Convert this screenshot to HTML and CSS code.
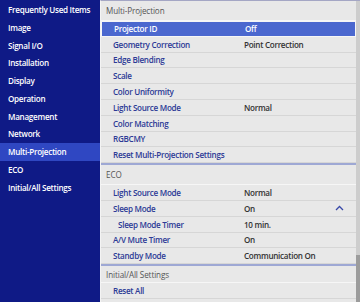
FILE: index.html
```html
<!DOCTYPE html>
<html lang="en">
<head>
  <meta charset="UTF-8">
  <title>Multi-Projection</title>
  <link rel="stylesheet" href="styles.css">
</head>
<body>
  <div class="screen">
    <nav class="sidebar">
      <div class="nav-item">Frequently Used Items</div>
      <div class="nav-item">Image</div>
      <div class="nav-item">Signal I/O</div>
      <div class="nav-item">Installation</div>
      <div class="nav-item">Display</div>
      <div class="nav-item">Operation</div>
      <div class="nav-item">Management</div>
      <div class="nav-item">Network</div>
      <div class="nav-item active">Multi-Projection</div>
      <div class="nav-item">ECO</div>
      <div class="nav-item">Initial/All Settings</div>
    </nav>

    <main class="panel">
      <div class="list">
        <div class="section">
          <div class="section-title">Multi-Projection</div>
          <div class="row selected"><span>Projector ID</span><span class="value">Off</span></div>
          <div class="row"><span>Geometry Correction</span><span class="value">Point Correction</span></div>
          <div class="row"><span>Edge Blending</span><span class="value"></span></div>
          <div class="row"><span>Scale</span><span class="value"></span></div>
          <div class="row"><span>Color Uniformity</span><span class="value"></span></div>
          <div class="row"><span>Light Source Mode</span><span class="value">Normal</span></div>
          <div class="row"><span>Color Matching</span><span class="value"></span></div>
          <div class="row"><span>RGBCMY</span><span class="value"></span></div>
          <div class="row"><span>Reset Multi-Projection Settings</span><span class="value"></span></div>
        </div>

        <div class="section">
          <div class="section-title">ECO</div>
          <div class="row"><span>Light Source Mode</span><span class="value">Normal</span></div>
          <div class="row">
            <span>Sleep Mode</span><span class="value">On</span>
            <svg class="chevron" width="9" height="6" viewBox="0 0 9 6">
              <path d="M1 5 L4.5 1.5 L8 5" fill="none" stroke="#3848a8" stroke-width="1.3"/>
            </svg>
          </div>
          <div class="row sub"><span>Sleep Mode Timer</span><span class="value">10 min.</span></div>
          <div class="row"><span>A/V Mute Timer</span><span class="value">On</span></div>
          <div class="row"><span>Standby Mode</span><span class="value">Communication On</span></div>
        </div>

        <div class="section">
          <div class="section-title short">Initial/All Settings</div>
          <div class="row"><span>Reset All</span><span class="value"></span></div>
        </div>
      </div>

      <div class="scrollbar"><div class="thumb"></div></div>
    </main>
  </div>
</body>
</html>
```

FILE: styles.css
```css
* {
  margin: 0;
  padding: 0;
  box-sizing: border-box;
}

body {
  font-family: 'Open Sans', 'Noto Sans', sans-serif;
  font-size: 8.1px;
  font-weight: 600;
  letter-spacing: -0.28px;
  background: #e8e8e8;
  width: 360px;
  height: 302px;
  overflow: hidden;
}

.screen {
  display: flex;
  height: 302px;
}

.sidebar {
  width: 100px;
  background: #0f1a86;
  padding-top: 1px;
  flex-shrink: 0;
}

.nav-item {
  color: #fff;
  height: 17.75px;
  line-height: 17.75px;
  padding-left: 8px;
  white-space: nowrap;
}

.nav-item.active {
  background: #2f47c2;
}

.panel {
  flex: 1;
  display: flex;
  border-left: 1px solid #f4f4f4;
  border-top: 1px solid #a4a6c4;
}

.list {
  flex: 1;
}

.section {
  border-bottom: 2px solid #9ea8d4;
}

.section:last-child {
  border-bottom: none;
}

.section-title {
  color: #555;
  font-weight: 400;
  letter-spacing: -0.1px;
  height: 20px;
  line-height: 20px;
  padding-left: 5px;
  border-bottom: 1px solid #f6f6f6;
}

.section-title.short {
  height: 17px;
  line-height: 17px;
}

.row {
  display: grid;
  grid-template-columns: 131px 1fr auto;
  align-items: center;
  height: 15.8px;
  padding-left: 12px;
  padding-right: 12px;
  color: #2c3a96;
  border-bottom: 1px solid #d6d6d6;
  white-space: nowrap;
}

.row .value {
  color: #333;
}

.row.sub span:first-child {
  padding-left: 5px;
}

.row.selected {
  background: #4b68cf;
  color: #fff;
  border: 1px solid #f6f6f6;
}

.row.selected .value {
  color: #fff;
}

.scrollbar {
  width: 4px;
  background: #cdcdcd;
  display: flex;
  flex-direction: column;
  justify-content: flex-end;
}

.thumb {
  height: 47px;
  background: #9c9c9c;
}
```
